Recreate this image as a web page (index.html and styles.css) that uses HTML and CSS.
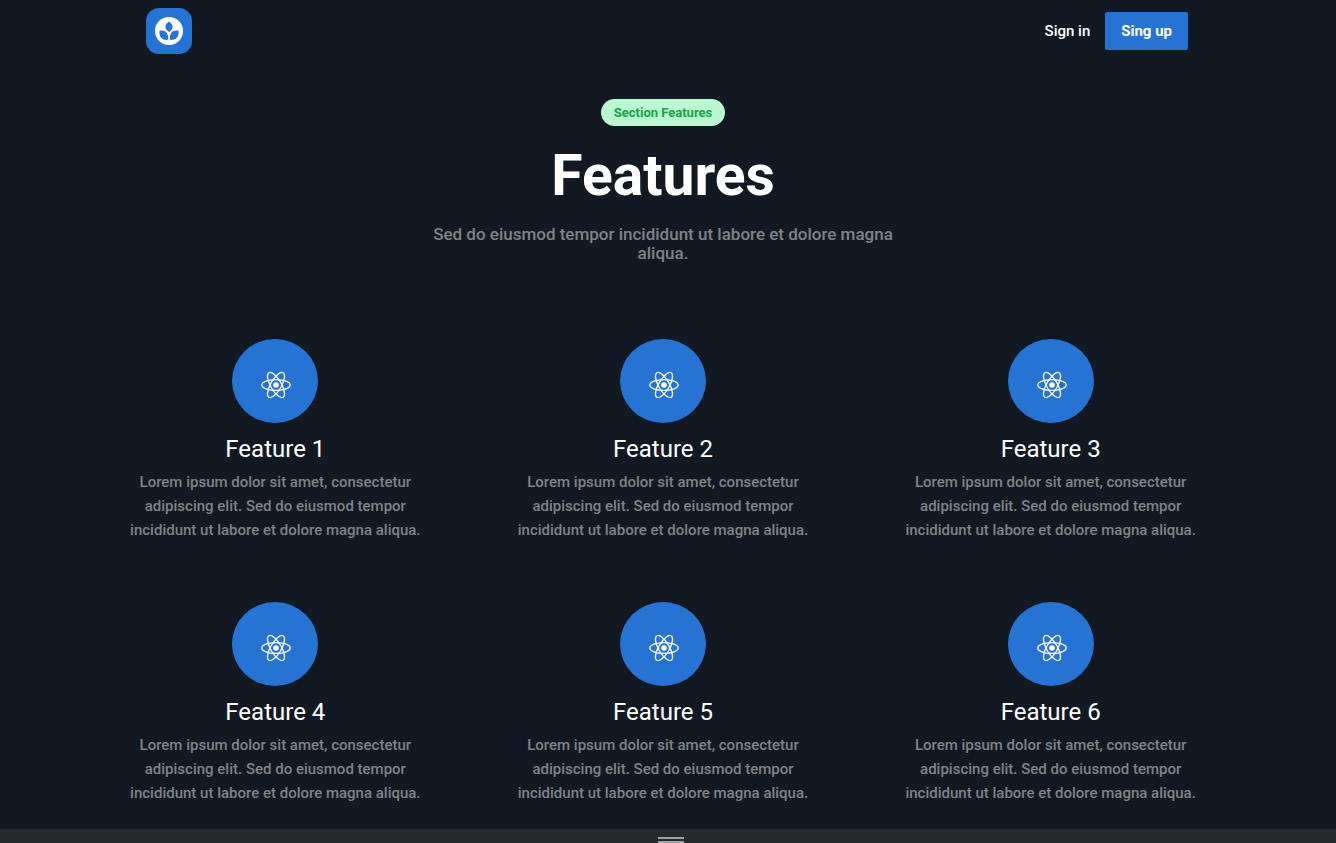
FILE: index.html
```html
<!DOCTYPE html>
<html lang="en">
<head>
    <meta charset="UTF-8">
    <meta name="viewport" content="width=device-width, initial-scale=1.0">
    <title>Features</title>
    <link rel="stylesheet" href="styles.css">
</head>
<body>
    <!-- Shared icon -->
    <svg class="sprite" aria-hidden="true">
        <symbol id="icon-atom" viewBox="0 0 32 32">
            <circle cx="16" cy="16" r="2.8" fill="#fff"/>
            <g fill="none" stroke="#fff" stroke-width="1.3">
                <ellipse cx="16" cy="16" rx="14.2" ry="5.4"/>
                <ellipse cx="16" cy="16" rx="14.2" ry="5.4" transform="rotate(60 16 16)"/>
                <ellipse cx="16" cy="16" rx="14.2" ry="5.4" transform="rotate(120 16 16)"/>
            </g>
        </symbol>
    </svg>

    <div class="page">
        <header class="navbar">
            <a href="#" class="logo" aria-label="Home">
                <svg viewBox="0 0 46 46">
                    <rect width="46" height="46" rx="13" fill="#2773d3"/>
                    <circle cx="23" cy="23" r="14" fill="#fff"/>
                    <g fill="#2773d3">
                        <path d="M23 13.6c4.8 3.400 4.800 7.200 0 10.400c-4.800-3.200-4.800-7 0-10.400z"/>
                        <path d="M13.400 22.800c6-1 9.200 2.200 8.800 9c-6.200 .8-9.200-2.600-8.800-9z"/>
                        <path d="M32.600 22.800c-6-1-9.200 2.200-8.800 9c6.200 .8 9.200-2.600 8.800-9z"/>
                    </g>
                </svg>
            </a>
            <nav class="nav-actions">
                <a href="#" class="sign-in">Sign in</a>
                <button type="button" class="sign-up">Sing up</button>
            </nav>
        </header>

        <main>
            <section class="intro">
                <span class="badge">Section Features</span>
                <h1>Features</h1>
                <p>Sed do eiusmod tempor incididunt ut labore et dolore magna aliqua.</p>
            </section>

            <section class="features">
                <article class="feature">
                    <div class="feature-icon"><svg><use href="#icon-atom"/></svg></div>
                    <h2>Feature 1</h2>
                    <p>Lorem ipsum dolor sit amet, consectetur adipiscing elit. Sed do eiusmod tempor incididunt ut labore et dolore magna aliqua.</p>
                </article>
                <article class="feature">
                    <div class="feature-icon"><svg><use href="#icon-atom"/></svg></div>
                    <h2>Feature 2</h2>
                    <p>Lorem ipsum dolor sit amet, consectetur adipiscing elit. Sed do eiusmod tempor incididunt ut labore et dolore magna aliqua.</p>
                </article>
                <article class="feature">
                    <div class="feature-icon"><svg><use href="#icon-atom"/></svg></div>
                    <h2>Feature 3</h2>
                    <p>Lorem ipsum dolor sit amet, consectetur adipiscing elit. Sed do eiusmod tempor incididunt ut labore et dolore magna aliqua.</p>
                </article>
                <article class="feature">
                    <div class="feature-icon"><svg><use href="#icon-atom"/></svg></div>
                    <h2>Feature 4</h2>
                    <p>Lorem ipsum dolor sit amet, consectetur adipiscing elit. Sed do eiusmod tempor incididunt ut labore et dolore magna aliqua.</p>
                </article>
                <article class="feature">
                    <div class="feature-icon"><svg><use href="#icon-atom"/></svg></div>
                    <h2>Feature 5</h2>
                    <p>Lorem ipsum dolor sit amet, consectetur adipiscing elit. Sed do eiusmod tempor incididunt ut labore et dolore magna aliqua.</p>
                </article>
                <article class="feature">
                    <div class="feature-icon"><svg><use href="#icon-atom"/></svg></div>
                    <h2>Feature 6</h2>
                    <p>Lorem ipsum dolor sit amet, consectetur adipiscing elit. Sed do eiusmod tempor incididunt ut labore et dolore magna aliqua.</p>
                </article>
            </section>
        </main>
    </div>

    <!-- Panel handle -->
    <footer class="handle-bar">
        <span class="handle"></span>
    </footer>
</body>
</html>
```
FILE: styles.css
```css
* {
    margin: 0;
    padding: 0;
    box-sizing: border-box;
}

body {
    display: flex;
    flex-direction: column;
    min-height: 100vh;
    background-color: #121922;
    color: #fff;
    font-family: Roboto, 'Liberation Sans', sans-serif;
    font-size: 15px;
}

.sprite {
    display: none;
}

.page {
    flex: 1;
    padding: 8px 10px 22px 0;
}

/* Navbar */
.navbar {
    display: flex;
    justify-content: space-between;
    align-items: center;
    max-width: 1050px;
    margin: 0 auto;
    padding-left: 8px;
}

.logo svg {
    display: block;
    width: 46px;
    height: 46px;
}

.nav-actions {
    display: flex;
    align-items: center;
    gap: 15px;
}

.sign-in {
    color: #fff;
    font-weight: 500;
    text-decoration: none;
}

.sign-up {
    height: 38px;
    padding: 0 16px;
    border: none;
    border-radius: 2px;
    background-color: #2773d3;
    color: #fff;
    font-family: inherit;
    font-size: 15px;
    font-weight: 700;
    cursor: pointer;
}

/* Intro */
.intro {
    display: flex;
    flex-direction: column;
    align-items: center;
    padding-top: 45px;
    text-align: center;
}

.badge {
    padding: 0 13px;
    border-radius: 14px;
    background-color: #bbf7d0;
    color: #16a34a;
    font-size: 13px;
    font-weight: 700;
    line-height: 27px;
}

h1 {
    margin-top: 20px;
    font-size: 57px;
    line-height: 60px;
}

.intro p {
    max-width: 480px;
    margin-top: 19px;
    color: #808387;
    font-size: 17px;
    font-weight: 500;
    line-height: 19px;
}

/* Features */
.features {
    display: grid;
    grid-template-columns: repeat(3, 1fr);
    row-gap: 60px;
    max-width: 1163px;
    margin: 76px auto 0;
}

.feature {
    display: flex;
    flex-direction: column;
    align-items: center;
    text-align: center;
}

.feature-icon {
    display: flex;
    justify-content: center;
    width: 86px;
    height: 84px;
    padding: 30px 0 0 2px;
    border-radius: 50%;
    background-color: #2773d3;
}

.feature-icon svg {
    width: 32px;
    height: 32px;
}

h2 {
    margin-top: 10px;
    font-size: 24px;
    font-weight: 400;
    line-height: 32px;
}

.feature p {
    max-width: 320px;
    margin-top: 5px;
    color: #808387;
    font-size: 15px;
    font-weight: 500;
    line-height: 24px;
}

/* Panel handle */
.handle-bar {
    display: flex;
    justify-content: center;
    height: 14px;
    padding: 8px 0 0 6px;
    background-color: #28292d;
}

.handle {
    width: 26px;
    height: 6px;
    border-top: 2px solid #a2a3a5;
    border-bottom: 2px solid #a2a3a5;
}
```
